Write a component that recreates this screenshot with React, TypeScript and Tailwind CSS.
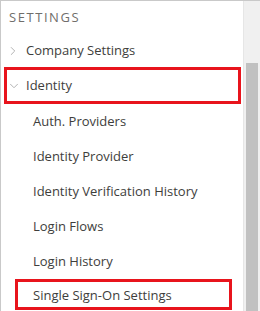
import { ChevronRight, ChevronDown } from "lucide-react";

const subItems = ["Auth. Providers", "Identity Provider", "Identity Verification History", "Login Flows", "Login History"];

export default function App() {
  return (
    <div
      className="flex h-[311px] w-[260px] overflow-hidden border-l border-t border-[#c9c9c9] bg-white text-[#3e3e3c]"
      style={{ fontFamily: '"Open Sans", "Noto Sans", sans-serif' }}
    >
      <div className="flex-1">
        {/* Section header */}
        <div className="flex h-[34px] items-center pl-2 text-[13px] uppercase tracking-[0.12em] text-[#706e6b]">
          Settings
        </div>

        {/* Collapsed group */}
        <div className="flex h-[32px] items-center pl-[5px] text-[13px]">
          <ChevronRight className="h-[14px] w-[14px] text-[#a8a8a8]" strokeWidth={1.5} />
          <span className="ml-[6px]">Company Settings</span>
        </div>

        {/* Expanded group, highlighted */}
        <div className="ml-[3px] mr-[2px] flex h-[37px] items-center border-[3px] border-[#e8141c] pl-0 text-[13px]">
          <ChevronDown className="h-[14px] w-[14px] text-[#a8a8a8]" strokeWidth={1.5} />
          <span className="ml-[5px]">Identity</span>
        </div>

        {subItems.map((label) => (
          <div key={label} className="flex h-[35px] items-center pl-[32px] text-[13px]">
            {label}
          </div>
        ))}

        <div className="ml-[14px] mr-[11px] flex h-[31px] items-center border-[3px] border-[#e8141c] pl-[15px] pt-[3px] text-[13px]">
          Single Sign-On Settings
        </div>
      </div>

      {/* Scrollbar */}
      <div className="flex w-[17px] flex-col border-l border-[#e6e6e6] bg-[#f0f0f0] px-[2px]">
        <div className="mt-[62px] flex-1 bg-[#c1c1c1]" />
      </div>
    </div>
  );
}
